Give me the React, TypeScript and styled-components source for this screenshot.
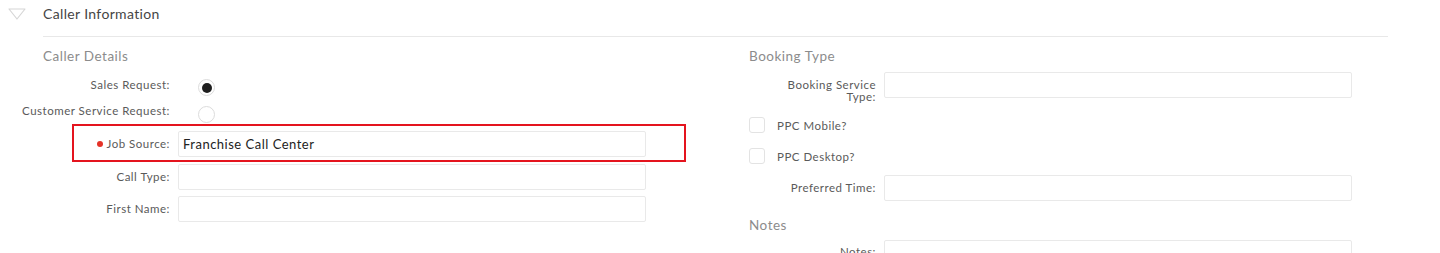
import styled, { createGlobalStyle } from 'styled-components'

const GlobalStyle = createGlobalStyle`
  body {
    margin: 0;
    background: #ffffff;
    font-family: Lato, 'Open Sans', sans-serif;
  }
`

const Page = styled.div`
  width: 1440px;
  height: 253px;
  overflow: hidden;
`

const SectionHeader = styled.div`
  display: flex;
  align-items: center;
  height: 27px;
  padding-left: 8px;
`

const Toggle = styled.svg`
  width: 18px;
  height: 12px;
  margin-right: 17px;
`

const SectionTitle = styled.h2`
  margin: 0;
  font-size: 14px;
  font-weight: 400;
  letter-spacing: 0.35px;
  color: #454545;
`

const Divider = styled.hr`
  margin: 9px 52px 0 43px;
  border: 0;
  height: 1px;
  background: #e8e8e8;
`

const Columns = styled.div`
  display: grid;
  grid-template-columns: 706px 1fr;
  padding-left: 43px;
`

const Column = styled.div`
  display: flex;
  flex-direction: column;
  align-items: flex-start;
`

const GroupTitle = styled.h3<{ $top: number }>`
  margin: ${({ $top }) => $top}px 0 0;
  height: 20px;
  line-height: 20px;
  font-size: 13.5px;
  font-weight: 400;
  letter-spacing: 0.5px;
  color: #8c8c8c;
`

const Row = styled.div<{ $top: number; $height?: number; $highlight?: boolean }>`
  position: relative;
  display: flex;
  align-items: center;
  height: ${({ $height }) => $height ?? 26}px;
  margin-top: ${({ $top }) => $top}px;

  ${({ $highlight }) =>
    $highlight &&
    `
    &::before {
      content: '';
      position: absolute;
      top: -7px;
      bottom: -5px;
      left: 29px;
      right: -40px;
      border: 2px solid #e4141e;
      pointer-events: none;
    }
  `}
`

const Label = styled.label<{ $top?: boolean }>`
  display: flex;
  justify-content: flex-end;
  align-items: center;
  align-self: ${({ $top }) => ($top ? 'flex-start' : 'center')};
  width: 127px;
  flex-shrink: 0;
  margin-right: 8px;
  font-size: 11.5px;
  line-height: 12px;
  letter-spacing: 0.5px;
  color: #5a5a5a;
  white-space: nowrap;
  text-align: right;
`

const LabelText = styled.span<{ $pad?: number }>`
  padding-top: ${({ $pad }) => $pad ?? 0}px;
`

const Required = styled.span`
  width: 6px;
  height: 6px;
  border-radius: 50%;
  background: #e53228;
  margin-right: 4px;
`

const Input = styled.div`
  box-sizing: border-box;
  width: 468px;
  height: 26px;
  border: 1px solid #e9e9e9;
  border-radius: 2px;
  padding: 0 4px;
  display: flex;
  align-items: center;
  font-size: 13px;
  letter-spacing: 0.5px;
  color: #222;
`

const Radio = styled.span<{ $checked?: boolean; $offset: number }>`
  position: relative;
  box-sizing: border-box;
  width: 17px;
  height: 17px;
  margin-left: 20px;
  margin-top: ${({ $offset }) => $offset}px;
  align-self: flex-start;
  border: 1px solid #dcdcdc;
  border-radius: 50%;
  background: #fff;

  ${({ $checked }) =>
    $checked &&
    `
    &::after {
      content: '';
      position: absolute;
      top: 2.5px;
      left: 2.5px;
      width: 10px;
      height: 10px;
      border-radius: 50%;
      background: #1f1f1f;
    }
  `}
`

const CheckRow = styled.div<{ $top: number }>`
  display: flex;
  align-items: center;
  margin-top: ${({ $top }) => $top}px;
  height: 16px;
`

const Checkbox = styled.span`
  box-sizing: border-box;
  width: 16px;
  height: 16px;
  border: 1px solid #e3e3e3;
  border-radius: 3px;
  margin-right: 12px;
`

const CheckLabel = styled.span`
  font-size: 11.5px;
  letter-spacing: 0.5px;
  color: #5a5a5a;
`

export default function App() {
  return (
    <Page>
      <GlobalStyle />
      <SectionHeader>
        <Toggle viewBox="0 0 18 12">
          <path d="M1 1 L17 1 L9 11 Z" fill="none" stroke="#d6d6d6" strokeWidth="1.2" strokeLinejoin="round" />
        </Toggle>
        <SectionTitle>Caller Information</SectionTitle>
      </SectionHeader>
      <Divider />
      <Columns>
        <Column>
          <GroupTitle $top={9}>Caller Details</GroupTitle>
          <Row $top={11} $height={20}>
            <Label $top>
              <LabelText $pad={2}>Sales Request:</LabelText>
            </Label>
            <Radio $checked $offset={2} />
          </Row>
          <Row $top={5} $height={20}>
            <Label $top>
              <LabelText $pad={3}>Customer Service&nbsp;Request:</LabelText>
            </Label>
            <Radio $offset={4} />
          </Row>
          <Row $top={9} $highlight>
            <Label>
              <Required />
              Job Source:
            </Label>
            <Input>Franchise Call Center</Input>
          </Row>
          <Row $top={7}>
            <Label>Call Type:</Label>
            <Input />
          </Row>
          <Row $top={6}>
            <Label>First Name:</Label>
            <Input />
          </Row>
        </Column>
        <Column>
          <GroupTitle $top={9}>Booking Type</GroupTitle>
          <Row $top={6}>
            <Label $top>
              <LabelText $pad={7}>
                Booking Service
                <br />
                Type:
              </LabelText>
            </Label>
            <Input />
          </Row>
          <CheckRow $top={19}>
            <Checkbox />
            <CheckLabel>PPC Mobile?</CheckLabel>
          </CheckRow>
          <CheckRow $top={15}>
            <Checkbox />
            <CheckLabel>PPC Desktop?</CheckLabel>
          </CheckRow>
          <Row $top={11}>
            <Label>Preferred Time:</Label>
            <Input />
          </Row>
          <GroupTitle $top={14}>Notes</GroupTitle>
          <Row $top={5}>
            <Label $top>
              <LabelText $pad={6}>Notes:</LabelText>
            </Label>
            <Input />
          </Row>
        </Column>
      </Columns>
    </Page>
  )
}
